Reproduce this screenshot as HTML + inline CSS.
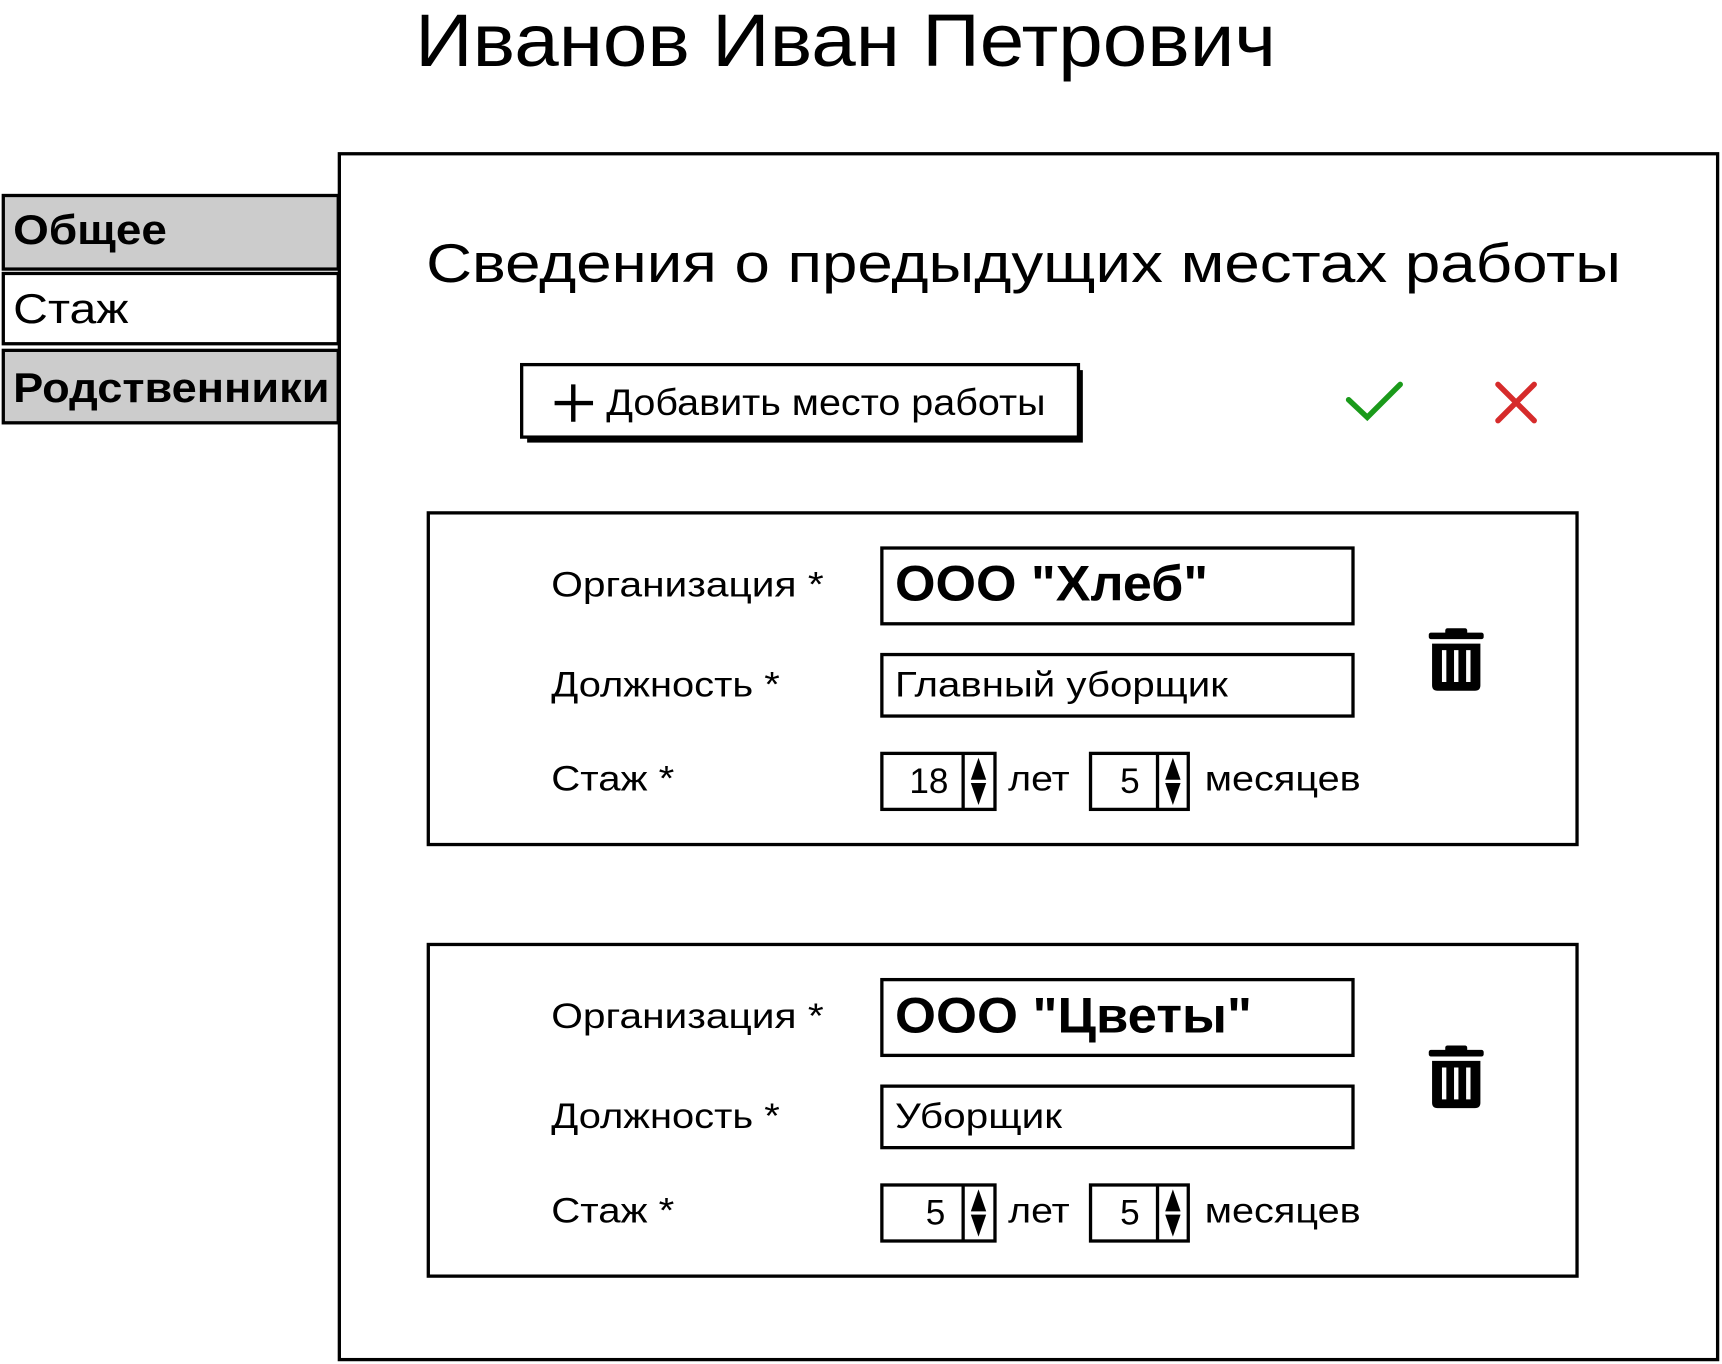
<!DOCTYPE html>
<html><head><meta charset="utf-8"><style>
html,body{margin:0;padding:0;background:#fff;}
svg{display:block;}
text{font-family:"Liberation Sans",sans-serif;fill:#000;}
</style></head><body>
<svg width="1722" height="1364" viewBox="0 0 1568 1242" xmlns="http://www.w3.org/2000/svg">
<text x="378" y="60" font-size="68" textLength="784" lengthAdjust="spacingAndGlyphs">Иванов Иван Петрович</text>
<rect x="309" y="140" width="1255" height="1098" fill="#fff" stroke="#000" stroke-width="3"/>
<rect x="3" y="178" width="305" height="67" fill="#ccc" stroke="#000" stroke-width="3"/>
<text x="12" y="222" font-size="38" font-weight="bold" textLength="140" lengthAdjust="spacingAndGlyphs">Общее</text>
<rect x="3" y="249" width="305" height="64" fill="#fff" stroke="#000" stroke-width="3"/>
<text x="12" y="294" font-size="38" textLength="105" lengthAdjust="spacingAndGlyphs">Стаж</text>
<rect x="3" y="319" width="305" height="66" fill="#ccc" stroke="#000" stroke-width="3"/>
<text x="12" y="366" font-size="38" font-weight="bold" textLength="288" lengthAdjust="spacingAndGlyphs">Родственники</text>
<text x="388" y="257" font-size="50" textLength="1088" lengthAdjust="spacingAndGlyphs">Сведения о предыдущих местах работы</text>
<rect x="480" y="337" width="506" height="66" fill="#000"/>
<rect x="475" y="332" width="507" height="66" fill="#fff" stroke="#000" stroke-width="3"/>
<path d="M505 367H540M522 350V384" stroke="#000" stroke-width="4"/>
<text x="552" y="378" font-size="34" textLength="400" lengthAdjust="spacingAndGlyphs">Добавить место работы</text>
<path d="M1228 364L1245 380L1275 350" stroke="#1a9a1a" stroke-width="5" fill="none" stroke-linecap="round"/>
<path d="M1364 350L1397 383M1397 350L1364 383" stroke="#d62b2b" stroke-width="5" stroke-linecap="round"/>
<g id="card">
<rect x="390" y="467" width="1046" height="302" fill="#fff" stroke="#000" stroke-width="3"/>
<text x="502" y="543" font-size="32" textLength="248" lengthAdjust="spacingAndGlyphs">Организация *</text>
<text x="502" y="634" font-size="32" textLength="208" lengthAdjust="spacingAndGlyphs">Должность *</text>
<text x="502" y="720" font-size="32" textLength="112" lengthAdjust="spacingAndGlyphs">Стаж *</text>
<rect x="803" y="499" width="429" height="69" fill="#fff" stroke="#000" stroke-width="3"/>
<rect x="803" y="596" width="429" height="56" fill="#fff" stroke="#000" stroke-width="3"/>
<rect x="803" y="686" width="103" height="51" fill="#fff" stroke="#000" stroke-width="3"/>
<line x1="877" y1="686" x2="877" y2="737" stroke="#000" stroke-width="3"/>
<path d="M891 690L898 710H884Z M891 733L898 713H884Z" fill="#000"/>
<text x="918" y="720" font-size="32" textLength="56" lengthAdjust="spacingAndGlyphs">лет</text>
<rect x="993" y="686" width="89" height="51" fill="#fff" stroke="#000" stroke-width="3"/>
<line x1="1054" y1="686" x2="1054" y2="737" stroke="#000" stroke-width="3"/>
<path d="M1068 690L1075 710H1061Z M1068 733L1075 713H1061Z" fill="#000"/>
<text x="1020" y="722" font-size="32">5</text>
<text x="1097" y="720" font-size="32" textLength="142" lengthAdjust="spacingAndGlyphs">месяцев</text>
</g>
<use href="#card" y="393"/>
<g id="trash">
<rect x="1301" y="576" width="50" height="6" rx="2" fill="#000"/>
<rect x="1316" y="572" width="20" height="6" rx="2" fill="#000"/>
<path d="M1304 586H1348V624Q1348 629 1343 629H1309Q1304 629 1304 624Z" fill="#000"/>
<path d="M1315 592V621M1326 592V621M1337 592V621" stroke="#fff" stroke-width="4"/>
</g>
<use href="#trash" y="380"/>
<text x="815" y="547" font-size="46" font-weight="bold" textLength="285" lengthAdjust="spacingAndGlyphs">ООО "Хлеб"</text>
<text x="815" y="634" font-size="32" textLength="303" lengthAdjust="spacingAndGlyphs">Главный уборщик</text>
<text x="828" y="722" font-size="32">18</text>
<text x="815" y="940" font-size="46" font-weight="bold" textLength="325" lengthAdjust="spacingAndGlyphs">ООО "Цветы"</text>
<text x="815" y="1027" font-size="32" textLength="152" lengthAdjust="spacingAndGlyphs">Уборщик</text>
<text x="843" y="1115" font-size="32">5</text>
</svg>
</body></html>
